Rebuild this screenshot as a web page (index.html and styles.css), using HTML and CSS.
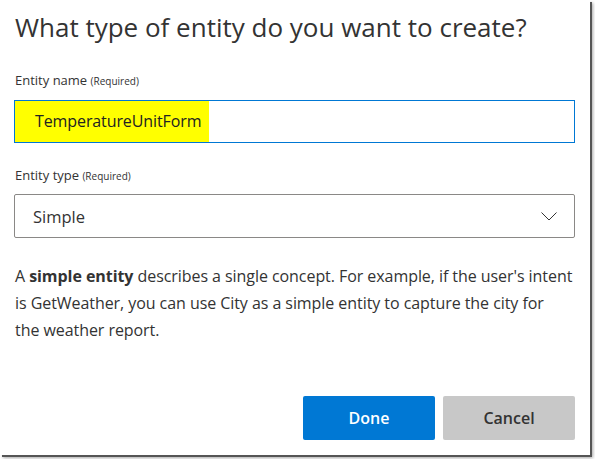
FILE: index.html
```html
<!DOCTYPE html>
<html>
<head>
<meta charset="utf-8">
<link rel="stylesheet" href="styles.css">
</head>
<body>
<div class="dialog">
  <h1 class="title">What type of entity do you want to create?</h1>
  <div class="field field-name">
    <label class="label">Entity name <span class="req">(Required)</span></label>
    <div class="input"><span class="hl">TemperatureUnitForm</span></div>
  </div>
  <div class="field field-type">
    <label class="label">Entity type <span class="req">(Required)</span></label>
    <div class="select">
      <span>Simple</span>
      <svg class="chev" width="16" height="9" viewBox="0 0 16 9"><path d="M0.5 0.5 L8 8 L15.5 0.5" fill="none" stroke="#333" stroke-width="1"/></svg>
    </div>
  </div>
  <p class="desc">A <b>simple entity</b> describes a single concept. For example, if the user's intent<br>is GetWeather, you can use City as a simple entity to capture the city for<br>the weather report.</p>
  <div class="actions">
    <button class="btn primary">Done</button>
    <button class="btn secondary">Cancel</button>
  </div>
</div>
</body>
</html>
```
FILE: styles.css
```css
html, body { margin: 0; padding: 0; background: #fff; }
body { width: 595px; height: 459px; overflow: hidden; font-family: "Open Sans", "Noto Sans", sans-serif; color: #333; }
.dialog {
  width: 590px; height: 455px; box-sizing: border-box;
  padding: 12px 15px 0 14px;
  background: #fff;
  box-shadow: 2px 2px 0 #555, 3px 3px 3px rgba(0,0,0,0.35);
  display: flex; flex-direction: column;
}
.title { margin: 0 0 0 1px; font-size: 26px; font-weight: 400; line-height: 30px; color: #333; }
.field { display: flex; flex-direction: column; }
.field-name { margin-top: 30px; }
.field-type { margin-top: 24px; }
.label { font-size: 13px; line-height: 16px; margin-left: 1px; color: #333; }
.req { font-size: 10px; }
.input { margin-top: 11px; height: 43px; box-sizing: border-box; border: 1px solid #0078d4; display: flex; }
.hl { background: #ffff00; width: 194px; padding-left: 20px; box-sizing: border-box; font-size: 16px; line-height: 41px; color: #222; letter-spacing: -0.1px; }
.select { margin-top: 10px; height: 44px; box-sizing: border-box; border: 1px solid #8a8886; border-radius: 2px; display: flex; align-items: center; justify-content: space-between; padding: 0 17px 0 18px; font-size: 16.5px; }
.chev { display: block; }
.desc { margin: 25px 0 0 1px; font-size: 16px; line-height: 27px; color: #333; letter-spacing: -0.06px; white-space: nowrap; }
.desc b { font-weight: 700; }
.actions { margin-top: auto; margin-bottom: 15px; display: flex; justify-content: flex-end; gap: 8px; }
.btn { width: 132px; height: 44px; border: 0; border-radius: 2px; font-family: inherit; font-size: 16px; font-weight: 600; }
.primary { background: #0078d4; color: #fff; }
.secondary { background: #c8c8c8; color: #333; }
```
